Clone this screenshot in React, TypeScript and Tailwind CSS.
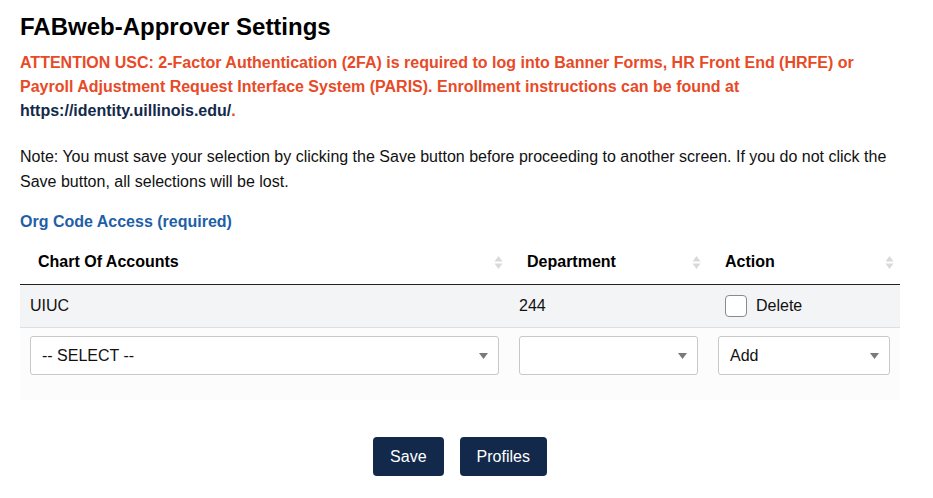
// sort arrows shown at the right of each table header
function SortIcon() {
  return (
    <svg width="9" height="15" viewBox="0 0 9 15" className="shrink-0">
      <path d="M4.5 1 L8.5 6.5 L0.5 6.5 Z" fill="#d9d9d9" />
      <path d="M4.5 14 L8.5 8.5 L0.5 8.5 Z" fill="#d9d9d9" />
    </svg>
  );
}

function SelectBox({ label, className }: { label: string; className: string }) {
  return (
    <div
      className={`h-[39px] flex items-center justify-between pl-[11px] pr-[10px] bg-white border border-[#c8c8c8] rounded-[3px] ${className}`}
    >
      <span className="text-[16px] text-[#111]">{label}</span>
      <svg width="9" height="6" viewBox="0 0 9 6">
        <path d="M0 0 L9 0 L4.5 6 Z" fill="#7a7a7a" />
      </svg>
    </div>
  );
}

const columns = [
  { name: 'Chart Of Accounts', width: 'w-[489px]' },
  { name: 'Department', width: 'w-[198px]' },
  { name: 'Action', width: 'flex-1' },
];

export default function App() {
  return (
    <div className="min-h-screen bg-white px-5 pt-[11px] font-['Liberation_Sans',Arial,sans-serif] text-[#111]">
      <h1 className="text-[24px] leading-[32px] font-bold text-black">FABweb-Approver Settings</h1>

      <p className="mt-[8px] text-[16px] leading-[24px] font-bold text-[#e84a27] w-[880px]">
        ATTENTION USC: 2-Factor Authentication (2FA) is required to log into Banner Forms, HR Front End (HRFE) or
        Payroll Adjustment Request Interface System (PARIS). Enrollment instructions can be found at{' '}
        <span className="text-[#13294b]">https://identity.uillinois.edu/</span>.
      </p>

      <p className="mt-[21px] text-[16px] leading-[25px] text-[#111] w-[880px]">
        Note: You must save your selection by clicking the Save button before proceeding to another screen. If you do
        not click the Save button, all selections will be lost.
      </p>

      <h2 className="mt-[16px] text-[16px] leading-[24px] font-bold text-[#1f5fa8]">Org Code Access (required)</h2>

      <div className="mt-[4px] w-[880px] bg-[#fcfcfc] pb-[25px]">
        <div className="flex h-[47px] border-b border-[#222] bg-white">
          {columns.map((col) => (
            <div key={col.name} className={`${col.width} flex items-center justify-between pl-[18px] pr-[6px] pt-[2px]`}>
              <span className="text-[16px] font-bold text-black">{col.name}</span>
              <SortIcon />
            </div>
          ))}
        </div>

        <div className="flex h-[43px] items-center bg-[#f3f4f6] border-b border-[#dedede] text-[16px]">
          <div className="w-[489px] pl-[10px]">UIUC</div>
          <div className="w-[198px] pl-[10px]">244</div>
          <div className="flex-1 flex items-center pl-[18px]">
            <span className="w-[22px] h-[22px] bg-white border border-[#8a8a8a] rounded-[4px]" />
            <span className="ml-[9px]">Delete</span>
          </div>
        </div>

        <div className="flex items-center pt-[8px]">
          <div className="w-[489px] pl-[10px]">
            <SelectBox label="-- SELECT --" className="w-[469px]" />
          </div>
          <div className="w-[198px] pl-[10px]">
            <SelectBox label="" className="w-[179px]" />
          </div>
          <div className="flex-1 pl-[11px]">
            <SelectBox label="Add" className="w-[172px]" />
          </div>
        </div>
      </div>

      <div className="mt-[37px] flex justify-center gap-4 pr-[13px]">
        <button className="h-[39px] px-[17px] rounded-[4px] bg-[#13294b] text-white text-[16px]">Save</button>
        <button className="h-[39px] px-[17px] rounded-[4px] bg-[#13294b] text-white text-[16px]">Profiles</button>
      </div>
    </div>
  );
}
